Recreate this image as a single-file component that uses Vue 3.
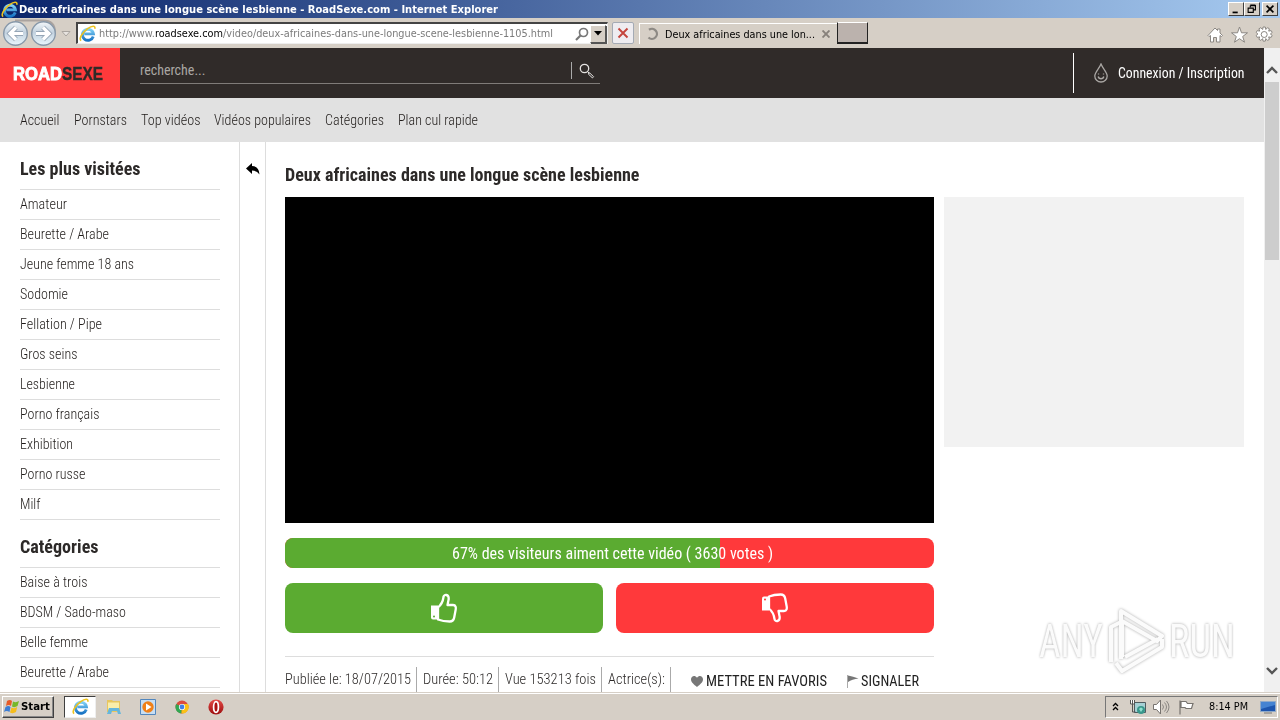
<script setup>
const nav = [
  ['Accueil', 39.5], ['Pornstars', 53], ['Top vidéos', 59.5],
  ['Vidéos populaires', 97], ['Catégories', 59], ['Plan cul rapide', 80],
]
const groups = [
  {
    title: ['Les plus visitées', 120.5],
    items: [
      ['Amateur', 47], ['Beurette / Arabe', 89], ['Jeune femme 18 ans', 114], ['Sodomie', 48],
      ['Fellation / Pipe', 82], ['Gros seins', 57.5], ['Lesbienne', 55], ['Porno français', 79.5],
      ['Exhibition', 53], ['Porno russe', 65.5], ['Milf', 20.5],
    ],
  },
  {
    title: ['Catégories', 78.5],
    items: [
      ['Baise à trois', 67.5], ['BDSM / Sado-maso', 106], ['Belle femme', 68], ['Beurette / Arabe', 89],
    ],
  },
]
const facts = [
  ['Publiée le: 18/07/2015', 126], ['Durée: 50:12', 70], ['Vue 153213 fois', 91], ['Actrice(s):', 57],
]
const likes = 67

// Condenses a label horizontally to the given width.
const vFit = {
  mounted(el, { value }) {
    const natural = el.getBoundingClientRect().width
    el.style.transform = `scaleX(${value / natural})`
    el.style.marginRight = `${value - natural}px`
  },
}
</script>

<template>
  <div class="screen">
    <svg width="0" height="0" class="defs">
      <defs>
        <linearGradient id="blue" x1="0" y1="0" x2="0" y2="1">
          <stop offset="0" stop-color="#7fd0f5" /><stop offset="1" stop-color="#1873c4" />
        </linearGradient>
        <linearGradient id="orb" x1="0" y1="0" x2="0" y2="1">
          <stop offset="0" stop-color="#f4f7fa" /><stop offset=".45" stop-color="#c3d2df" /><stop offset="1" stop-color="#e9f6fd" />
        </linearGradient>
        <linearGradient id="red" x1="0" y1="0" x2="0" y2="1">
          <stop offset="0" stop-color="#e54c48" /><stop offset="1" stop-color="#9c0c0d" />
        </linearGradient>
        <symbol id="ie" viewBox="0 0 16 16">
          <path d="M13.4 10.8A5.2 5.2 0 1 1 13.6 8.4H5" fill="none" stroke="url(#blue)" stroke-width="2.7" />
          <path d="M2 14.8C-.5 13 3 7 8.2 3.4 12 .8 15.8.2 14.8 3.6" fill="none" stroke="#edc21d" stroke-width="1.5" />
        </symbol>
      </defs>
    </svg>

    <div class="titlebar">
      <svg class="i17"><use href="#ie" width="17" height="17" /></svg>
      <span v-fit="479" class="fit title">Deux africaines dans une longue scène lesbienne - RoadSexe.com - Internet Explorer</span>
      <div class="winbtns">
        <svg class="wb" viewBox="0 0 16 14"><path d="M4 10h6v2H4z" /></svg>
        <svg class="wb restore" viewBox="0 0 16 14"><path d="M6 3h6v5h-2M6 2.5h6M6 3v2M3.500 6h6v5h-6zM3 6h7" fill="none" stroke="#000" stroke-width="1.300" /></svg>
        <svg class="wb" viewBox="0 0 16 14"><path d="M4 3l8 8m0-8l-8 8" stroke="#000" stroke-width="1.900" /></svg>
      </div>
    </div>

    <div class="toolbar">
      <svg class="navbtns" width="74" height="30" viewBox="0 0 74 30">
        <path d="M15 2.500h28q12 0 12 12" fill="none" stroke="#aaa39f" stroke-width="2" />
        <g fill="url(#orb)" stroke="#8798a9" stroke-width="1.400">
          <circle cx="15.500" cy="15.500" r="11.800" /><circle cx="43.500" cy="15.500" r="11.800" />
        </g>
        <g fill="none" stroke="#95a5b6" stroke-width="5"><path d="M23 15.500H10m6-6l-6 6 6 6M36 15.500h13m-6-6l6 6-6 6" /></g>
        <g fill="none" stroke="#fff" stroke-width="3.200"><path d="M23 15.500H10m6-6l-6 6 6 6M36 15.500h13m-6-6l6 6-6 6" /></g>
        <path d="M62 13.500h8l-4 4.500z" fill="#e8e4e0" stroke="#aaa5a0" />
      </svg>
      <div class="address">
        <svg class="i17"><use href="#ie" width="17" height="17" /></svg>
        <span v-fit="454" class="fit url">http://www.<b>roadsexe.com</b>/video/deux-africaines-dans-une-longue-scene-lesbienne-1105.html</span>
        <svg class="find" width="14" height="14" viewBox="0 0 14 14"><circle cx="8.500" cy="5.500" r="4" fill="none" stroke="#777" stroke-width="1.700" /><path d="M5.500 8.500l-4.500 4.500" stroke="#777" stroke-width="2.200" /></svg>
        <div class="drop"><svg width="8" height="5"><path d="M0 0h8L4 4.500z" /></svg></div>
      </div>
      <div class="stop"><svg width="12" height="12" viewBox="0 0 12 12"><path d="M1.500 1.500l9 9m0-9l-9 9" stroke="#c4443c" stroke-width="1.900" /></svg></div>
      <div class="tab">
        <svg width="12" height="14" viewBox="0 0 12 14"><path d="M2 2.800A5 5 0 1 1 1.500 10.500" fill="none" stroke="#8d8984" stroke-width="2.300" /></svg>
        <span v-fit="150" class="fit tabtext">Deux africaines dans une lon...</span>
        <svg class="tabx" width="8" height="8" viewBox="0 0 8 8"><path d="M.5.5l7 7m0-7l-7 7" stroke="#87817b" stroke-width="1.900" /></svg>
      </div>
      <div class="newtab"></div>
      <svg class="tools" width="66" height="18" viewBox="0 0 66 18" fill="#fff" stroke="#8b8782" stroke-width="1">
        <path d="M1 9.500L8 2l2.500 2.500V3h2.500v4l2.500 2.500-1 1-1.500-1V16h-3.500v-4.500h-3V16H3.500V9.500l-1.500 1z" />
        <path d="M32.500 1l2 5.800h6l-4.800 3.700 1.800 5.700-5-3.500-5 3.500 1.800-5.700-4.800-3.700h6z" />
        <path d="M55.600 3.500l.5-2.500h2.200l.5 2.500 1.700-1.800 1.900 1.100-.7 2.300 2.500-.5 1 1.900-1.800 1.500 1.800 1.400-1 2-2.500-.5.700 2.400-1.900 1.100-1.700-1.800-.5 2.500h-2.200l-.5-2.500-1.800 1.800-1.900-1.100.8-2.400-2.500.5-1-2 1.700-1.400-1.700-1.500 1-1.900 2.500.5-.8-2.300L53.800 1.700z" />
        <circle cx="57.200" cy="8.500" r="3" />
      </svg>
    </div>

    <div class="viewport">
      <div class="page">
        <header class="header">
          <div class="logo"><span v-fit="49" class="fit road">ROAD</span><span v-fit="41" class="fit sexe">SEXE</span></div>
          <div class="search">
            <span v-fit="65.5" class="fit">recherche...</span>
            <div class="glass"><svg width="16" height="16" viewBox="0 0 16 16" fill="none" stroke="#e5e3e1"><circle cx="5.500" cy="5.500" r="4.200" stroke-width="1.300" /><path d="M8.500 8.500l2 2" /><path d="M10.400 9.700l4.200 4-1.200 1.200-4.200-4z" /></svg></div>
          </div>
          <div class="login">
            <svg width="14" height="20" viewBox="0 0 14 20" fill="none" stroke="#aaa7a4" stroke-width="1.300"><path d="M7 1C5 6 .8 9 .8 13a6.200 6 0 0 0 12.400 0C13.200 9 9 6 7 1z" /><path d="M4.200 13.500c.6 3 5 3 5.600 0M4.500 10.500v1M9.500 10.500v1" /></svg>
            <span v-fit="126.500" class="fit">Connexion / Inscription</span>
          </div>
        </header>
        <nav class="nav"><span v-for="n in nav" :key="n[0]" v-fit="n[1]" class="fit">{{ n[0] }}</span></nav>
        <div class="body">
          <aside class="side">
            <template v-for="g in groups" :key="g.title[0]">
              <h2><span v-fit="g.title[1]" class="fit">{{ g.title[0] }}</span></h2>
              <div v-for="i in g.items" :key="i[0]" class="row"><span v-fit="i[1]" class="fit">{{ i[0] }}</span></div>
            </template>
          </aside>
          <div class="strip"><svg width="14" height="12" viewBox="0 0 14 12"><path d="M6 0v3q7 0 7.500 8.500Q11 7.500 6 7.500V11L0 5.500z" /></svg></div>
          <main class="main">
            <h1><span v-fit="354.500" class="fit">Deux africaines dans une longue scène lesbienne</span></h1>
            <div class="cols">
              <div class="video-col">
                <div class="video"></div>
                <div class="votes">
                  <div class="yes" :style="{ width: likes + '%' }"></div>
                  <div class="votetext"><span v-fit="321" class="fit">{{ likes }}% des visiteurs aiment cette vidéo ( 3630 votes )</span></div>
                </div>
                <div class="buttons">
                  <div class="btn up"><svg width="28" height="30" viewBox="0 0 28 30"><path d="M8 14.500C11.500 11.500 13 8 13.500 4c.3-3 5.500-3 5.200 2l-1.200 6H23c3 0 3 3 2.700 4.500l-1.500 8c-.5 3-2 4-4.500 4-4 0-8-.5-11.700-2z" fill="none" stroke="#fff" stroke-width="2.300" stroke-linejoin="round" /><path d="M1 12.500h7v14H3q-2 0-2-2z" fill="#fff" /><circle cx="4" cy="23.500" r="1" fill="#5bab31" /></svg></div>
                  <div class="btn down"><svg width="28" height="30" viewBox="0 0 28 30"><path d="M8 15.500c3.500 3 5 6.500 5.500 10.500.3 3 5.500 3 5.200-2l-1.200-6H23c3 0 3-3 2.700-4.500l-1.500-8c-.5-3-2-4-4.500-4-4 0-8 .5-11.700 2z" fill="none" stroke="#fff" stroke-width="2.300" stroke-linejoin="round" /><path d="M1 17.500h7v-14H3q-2 0-2 2z" fill="#fff" /><circle cx="4" cy="6.500" r="1" fill="#ff393b" /></svg></div>
                </div>
                <div class="info">
                  <div v-for="f in facts" :key="f[0]" class="fact"><span v-fit="f[1]" class="fit">{{ f[0] }}</span></div>
                  <div class="action fav"><svg width="12" height="11" viewBox="0 0 12 11"><path d="M6 11C3 8.500 0 6.500 0 3.300 0 0 4-1.300 6 1.800 8-1.300 12 0 12 3.300 12 6.500 9 8.500 6 11z" fill="#777" /></svg><span v-fit="121" class="fit">METTRE EN FAVORIS</span></div>
                  <div class="action flag"><svg width="12" height="13" viewBox="0 0 12 13"><path d="M.5 0v13" stroke="#aaa" /><path d="M1 .5q5 1 10.500 3Q5 4 1 7z" fill="#777" /></svg><span v-fit="58" class="fit">SIGNALER</span></div>
                </div>
              </div>
              <div class="ad"></div>
            </div>
          </main>
        </div>
      </div>
      <div class="scroll">
        <svg width="12" height="8" viewBox="0 0 12 8"><path d="M1 7l5-5 5 5" fill="none" stroke="#555" stroke-width="2.400" /></svg>
        <div class="thumb"></div>
        <svg class="dn" width="12" height="8" viewBox="0 0 12 8"><path d="M1 1l5 5 5-5" fill="none" stroke="#555" stroke-width="2.400" /></svg>
      </div>
      <div class="mark">
        <span v-fit="64" class="fit word">ANY</span>
        <svg class="tri" width="60" height="72" viewBox="72 0 60 72">
          <path d="M87 54V17L77 22v35M87 17V6l41 25-5 5-35-20v36" />
          <path d="M82 58l6 8 40-24v-8M91 52l33-18" />
        </svg>
        <span v-fit="66" class="fit word">RUN</span>
      </div>
    </div>

    <footer class="taskbar">
      <div class="start">
        <svg width="16" height="16" viewBox="0 0 16 16"><path d="M3 2q3-2 5 0L7 7Q5 5 2 7z" fill="#e75b28" /><path d="M9 2.500q3 1.500 6-.5l-1.500 5q-3 2-5.500.5z" fill="#76b82a" /><path d="M1.500 8q3-2 5 0l-1 5q-3-2-5.500 0z" fill="#3c7dd4" /><path d="M7.500 8.500q3 1.500 5.700-.5L12 13q-3 2-6 .5z" fill="#f5bd1c" /></svg>
        <span v-fit="29" class="fit">Start</span>
      </div>
      <div class="task on"><svg width="17" height="17"><use href="#ie" width="17" height="17" /></svg></div>
      <div class="task"><svg width="16" height="16" viewBox="0 0 16 16"><path d="M1 1h5l1 1h7v11H1z" fill="#e8c65e" /><path d="M2 3.500h11v7H2z" fill="#faeeaa" /><path d="M1 15l2-6h10l2 6h-3l-1-3H6l-1 3z" fill="#65b6dc" /></svg></div>
      <div class="task"><svg width="16" height="16" viewBox="0 0 16 16"><path d="M.5.5h15v15H.5z" fill="#c7def3" stroke="#5286bd" /><circle cx="8" cy="8" r="5.700" fill="#f08018" /><path d="M6 4.500v7L11.500 8z" fill="#fff" /></svg></div>
      <div class="task"><svg width="14" height="14" viewBox="0 0 14 14"><circle cx="7" cy="7" r="6.500" fill="#dd4b3e" /><path d="M7 7L1.200 4A6.500 6.500 0 0 0 6.500 13.500z" fill="#31a852" /><path d="M7 4h6a6.500 6.500 0 0 1-6.500 9.500z" fill="#fbc116" /><circle cx="7" cy="7" r="3.100" fill="#fff" /><circle cx="7" cy="7" r="2.400" fill="#427fe5" /></svg></div>
      <div class="task"><svg width="16" height="16" viewBox="0 0 16 16"><circle cx="8" cy="8" r="7.600" fill="url(#red)" /><ellipse cx="8" cy="8" rx="2.400" ry="5.300" fill="#a11" stroke="#fff" stroke-width="1.700" /></svg></div>
      <div class="tray">
        <svg width="7" height="9" viewBox="0 0 7 9"><path d="M1 4l2.500-2.500L6 4M1 8l2.500-2.500L6 8" fill="none" stroke="#000" stroke-width="1.300" /></svg>
        <svg class="net" width="16" height="16" viewBox="0 0 16 16"><path d="M4.500 3.500h11v10h-11z" fill="#a5d0d4" stroke="#4f5b60" /><path d="M.5 1v4h4V1" fill="#fff" stroke="#555" /><path d="M2.500 1v12h3" fill="none" stroke="#555" /><circle cx="11" cy="11" r="4" fill="#39978b" /><path d="M9 10q2-3 4 0l-2 3z" fill="#90dfd0" /></svg>
        <svg class="vol" width="17" height="16" viewBox="0 0 17 16"><path d="M.5 5.500h3L7.500 1v14L3.500 10.500h-3z" fill="#fff" stroke="#77736f" /><path d="M9.500 5.500q2 2.500 0 5M11.500 3.500q4 4.500 0 9M13.500 2q5 6 0 12" fill="none" stroke="#8a8682" /></svg>
        <svg class="tflag" width="16" height="16" viewBox="0 0 16 16"><path d="M2 1.500v14M3 2.500h5l1.500 2H15l-1.500 5H8l-1-1H3z" fill="#fff" stroke="#77736f" stroke-width="1.200" /></svg>
        <span v-fit="39" class="fit clock">8:14 PM</span>
        <svg class="desk" width="16" height="14" viewBox="0 0 16 14"><path d="M.5 1.500h15v10H.5z" fill="#1d55ae" stroke="#8fa9c9" /><path d="M1 2h14v3L1 9z" fill="#4583d2" /><path d="M4 13h8" stroke="#777" /></svg>
      </div>
    </footer>
  </div>
</template>

<style>
html, body { overflow: hidden; }
</style>
<style scoped>
* { box-sizing: border-box; }
.screen { width: 1280px; height: 720px; display: flex; flex-direction: column; overflow: hidden; background: #fff; font-family: "Roboto Condensed", Roboto, sans-serif; }
.defs { position: absolute; }
svg { display: block; flex: none; }
.fit { display: inline-block; flex: none; white-space: nowrap; transform-origin: left center; }
.i17 { width: 17px; height: 17px; }
.titlebar { height: 18px; flex: none; display: flex; align-items: center; padding-left: 1px; background: linear-gradient(90deg, #0a246a, #a6caf0); color: #fff; }
.title { margin-left: 1px; font: bold 11px "DejaVu Sans", sans-serif; }
.winbtns { margin-left: auto; display: flex; padding-right: 2px; }
.wb { width: 16px; height: 14px; background: #d6cfc6; border: 1px solid; border-color: #fff #404040 #404040 #fff; }
.restore { margin-right: 2px; }
.toolbar { height: 30px; flex: none; display: flex; background: #d6cfc6; }
.address { width: 532px; height: 22px; margin: 4px 0 0 2px; background: #fff; border: 1px solid #eee; border-top: 2px solid #444; border-left: 2px solid #444; display: flex; align-items: center; padding-left: 1px; }
.url { margin-left: 3px; font: 11px/14px "DejaVu Sans Condensed", "DejaVu Sans", sans-serif; color: #7b7b7b; }
.url b { font-weight: normal; color: #000; }
.find { margin-left: 22px; }
.drop { width: 16px; height: 18px; margin: 0 1px 0 auto; background: #d6cfc6; border: 1px solid; border-color: #fff #555 #555 #fff; display: grid; place-items: center; box-shadow: 1px 1px #555; }
.stop { width: 22px; height: 22px; margin: 4px 0 0 4px; background: #eeecf0; border: 1px solid #a4aab4; border-radius: 2px; display: grid; place-items: center; }
.tab { width: 198px; height: 21px; margin: 5px 0 0 5px; border-top: 1px solid #fff; border-left: 1px solid #fff; display: flex; align-items: center; padding-left: 7px; }
.tabtext { margin-left: 6px; font: 11px "DejaVu Sans Condensed", "DejaVu Sans", sans-serif; color: #000; }
.tabx { margin-left: 7px; }
.newtab { width: 31px; height: 22px; margin-top: 4px; background: #bbb2ad; border: 1px solid #222; border-bottom-width: 2px; border-top-color: #fff; }
.tools { margin: 8px 7px 0 auto; }
.viewport { position: relative; height: 644px; flex: none; display: flex; overflow: hidden; }
.page { width: 1264px; flex: none; }
.header { height: 50px; background: #302b29; display: flex; }
.logo { width: 120px; background: #ff393b; display: flex; align-items: center; padding: 2px 0 0 13px; font: bold 18px "Liberation Sans", sans-serif; }
.road { color: #fff; -webkit-text-stroke: .9px #fff; }
.sexe { color: #302b29; -webkit-text-stroke: .4px #302b29; }
.search { width: 460px; height: 27px; margin: 9px 0 0 20px; border-bottom: 1px solid #807c79; display: flex; align-items: center; color: #aaa7a4; font-size: 14px; }
.glass { width: 29px; height: 17px; margin-left: auto; border-left: 1px solid #aaa; padding: 1px 0 0 7px; }
.login { height: 40px; margin: 5px 19.5px 0 auto; border-left: 1px solid #fff; padding-left: 20px; display: flex; align-items: center; gap: 10px; color: #fff; font-size: 14px; font-weight: 400; }
.nav { height: 44px; background: #e1e1e1; display: flex; align-items: center; gap: 14px; padding-left: 20px; font-size: 14px; font-weight: 300; color: #1f1b19; }
.body { display: flex; height: 550px; }
.side { width: 240px; padding: 0 19px 0 20px; border-right: 1px solid #ddd; }
h1, h2 { margin: 0; font-size: 18px; font-weight: 700; color: #2c2928; }
h2 { height: 48px; display: flex; align-items: center; padding-top: 5px; border-bottom: 1px solid #ddd; }
.row { height: 30px; display: flex; align-items: center; padding-bottom: 2px; border-bottom: 1px solid #ddd; font-size: 14px; font-weight: 300; color: #1f1b19; }
.strip { width: 26px; border-right: 1px solid #ddd; padding: 21px 0 0 6px; }
.main { width: 998px; padding: 0 20px 0 19px; }
h1 { height: 55px; display: flex; align-items: center; padding-top: 10px; }
.cols { display: flex; gap: 10px; }
.video-col { width: 649px; }
.video { height: 326px; background: #000; }
.votes { position: relative; height: 30px; margin-top: 15px; border-radius: 8px; overflow: hidden; background: #ff393b; }
.yes { height: 100%; background: #5bab31; }
.votetext { position: absolute; inset: 0; display: flex; align-items: center; padding: 1px 0 0 167px; color: #fff; font-size: 16px; }
.buttons { display: flex; gap: 13px; margin-top: 15px; }
.btn { width: 318px; height: 50px; border-radius: 8px; display: grid; place-items: center; }
.up { background: #5bab31; }
.down { background: #ff393b; }
.info { display: flex; margin-top: 23px; padding-top: 10px; height: 60px; border-top: 1px solid #ddd; }
.fact { height: 50px; padding: 4px 5px 0 0; margin-right: 6px; border-right: 1px solid #aaa; font-size: 14px; font-weight: 300; color: #2c2928; line-height: 17px; }
.action { height: 28px; display: flex; align-items: center; gap: 3px; font-size: 14px; color: #222; }
.fav { margin-left: 14px; }
.flag { margin-left: 20px; gap: 2px; }
.ad { width: 300px; height: 250px; background: #f2f2f2; }
.scroll { width: 16px; background: #f0f0f0; display: flex; flex-direction: column; align-items: center; padding-top: 18px; }
.thumb { width: 14px; height: 178px; margin-top: 8px; background: #cdcdcd; }
.dn { margin: auto 0 17px; }
.mark { position: absolute; left: 1039px; top: 557px; height: 72px; display: flex; align-items: center; }
.word { padding-top: 0; font: 46px/60px "Roboto Condensed", Roboto, sans-serif; color: #fbfbfb; filter: drop-shadow(0 0 1.500px #aaa); }
.mark .tri { margin: 0 3px; fill: none; stroke: #fbfbfb; stroke-width: 4px; stroke-linejoin: round; filter: drop-shadow(0 0 1.500px #aaa); }
.taskbar { height: 28px; flex: none; display: flex; align-items: center; gap: 2px; background: #d6cfc6; border-top: 1px solid #d6cfc6; box-shadow: inset 0 1px #fff; padding: 0 2px; }
.start { width: 52px; height: 22px; margin-right: 8px; border: 1px solid; border-color: #fff #404040 #404040 #fff; box-shadow: inset -1px -1px #888; display: flex; align-items: center; padding-left: 1px; gap: 1px; font: bold 11px "DejaVu Sans Condensed", "DejaVu Sans", sans-serif; color: #000; }
.task { width: 32px; height: 22px; display: grid; place-items: center; }
.on { background: #fff; border: 1px solid; border-color: #404040 #eee #eee #404040; }
.tray { width: 173px; height: 22px; margin-left: auto; border: 1px solid; border-color: #777 #fff #fff #777; display: flex; align-items: center; padding-left: 6px; }
.net { margin-left: 11px; }
.vol { margin-left: 7px; }
.tflag { margin-left: 8px; }
.clock { margin-left: 15px; font: 11px "DejaVu Sans Condensed", "DejaVu Sans", sans-serif; color: #000; }
.desk { margin-left: 12px; }
</style>
